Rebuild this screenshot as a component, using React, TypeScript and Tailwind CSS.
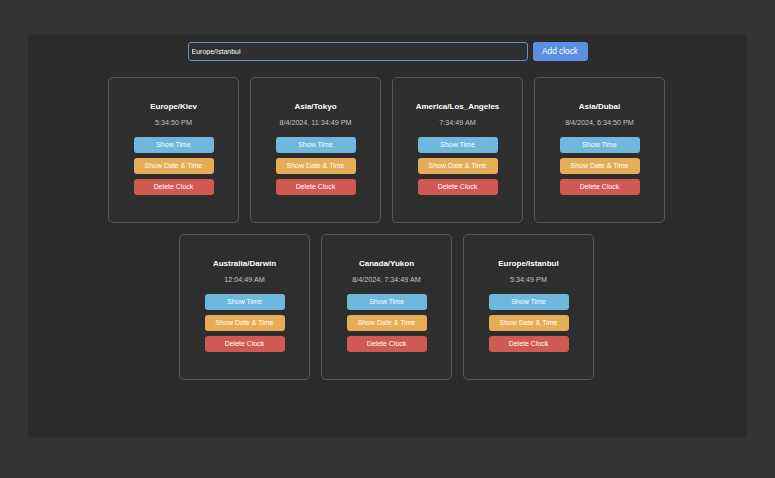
import React from 'react';

const clocks = [
  { zone: 'Europe/Kiev', time: '5:34:50 PM' },
  { zone: 'Asia/Tokyo', time: '8/4/2024, 11:34:49 PM' },
  { zone: 'America/Los_Angeles', time: '7:34:49 AM' },
  { zone: 'Asia/Dubai', time: '8/4/2024, 6:34:50 PM' },
  { zone: 'Australia/Darwin', time: '12:04:49 AM' },
  { zone: 'Canada/Yukon', time: '8/4/2024, 7:34:49 AM' },
  { zone: 'Europe/Istanbul', time: '5:34:49 PM' },
];

const ClockCard: React.FC<{ zone: string; time: string }> = ({ zone, time }) => (
  <div className="w-[131px] h-[146px] rounded-[5px] border border-[#575757] bg-[#2e2e2e] flex flex-col items-center pt-[24px]">
    <h3 className="text-[8px] leading-[10px] font-bold text-white">{zone}</h3>
    <p className="mt-[6px] text-[7.2px] leading-[9px] text-[#c4c4c4]">{time}</p>
    <div className="mt-[10px] flex flex-col gap-[5px]">
      <button className="w-[80px] h-[16px] rounded-[3px] bg-[#6db8dc] text-white text-[7px]">Show Time</button>
      <button className="w-[80px] h-[16px] rounded-[3px] bg-[#e6ad56] text-white text-[7px]">Show Date &amp; Time</button>
      <button className="w-[80px] h-[16px] rounded-[3px] bg-[#d05a51] text-white text-[7px]">Delete Clock</button>
    </div>
  </div>
);

const App: React.FC = () => {
  return (
    <div className="min-h-screen bg-[#333333] pt-[34px] px-[28px] font-['Liberation_Sans',Arial,sans-serif]">
      <div className="h-[404px] bg-[#2c2c2c] pt-[8px] flex flex-col items-center">
        <div className="flex gap-[5px]">
          <input
            className="w-[340px] h-[19px] rounded-[3px] border border-[#6f8fc4] bg-[#2f2f2f] px-[3px] text-[7px] text-white outline-none"
            defaultValue="Europe/Istanbul"
          />
          <button className="w-[55px] h-[19px] rounded-[3px] bg-[#5b8fe0] text-white text-[8.3px]">Add clock</button>
        </div>
        <div className="mt-[16px] mr-[2px] w-[557px] flex flex-wrap justify-center gap-[11px]">
          {clocks.map((c) => (
            <ClockCard key={c.zone} zone={c.zone} time={c.time} />
          ))}
        </div>
      </div>
    </div>
  );
};

export default App;
